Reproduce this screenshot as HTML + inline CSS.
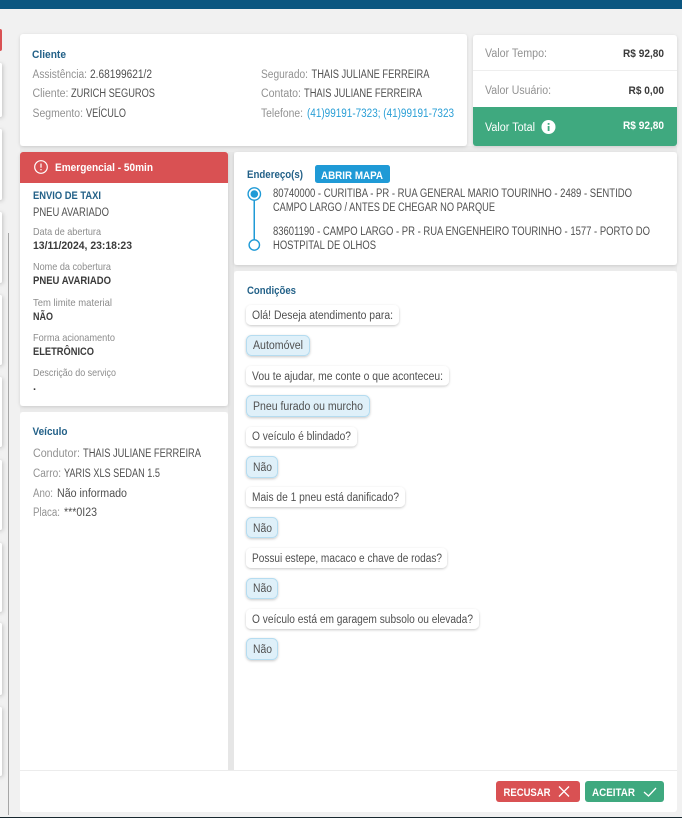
<!DOCTYPE html>
<html lang="pt-BR"><head><meta charset="utf-8"><title>Assistência</title>
<style>
html,body{margin:0;padding:0;background:#f1f1f1;width:682px;height:818px;overflow:hidden}
svg{display:block}
text{font-family:"Liberation Sans",sans-serif;font-size:11.5px;fill:#505050}
.l{fill:#929292}
.h{fill:#236188;font-weight:bold;font-size:11px}
.s{font-size:10.5px;fill:#8c8c8c}
.b{fill:#3a3a3a;font-weight:bold;font-size:11px}
.w{fill:#fff;font-weight:bold;font-size:11px}
.a{fill:#2a9fd6}
</style></head><body>
<svg xmlns="http://www.w3.org/2000/svg" width="682" height="818" viewBox="0 0 682 818">
<defs>
<filter id="sh" x="-10%" y="-10%" width="120%" height="120%"><feDropShadow dx="0" dy="1" stdDeviation="1.5" flood-color="#000" flood-opacity=".14"/></filter>
<filter id="ls" x="-60%" y="-10%" width="250%" height="120%"><feDropShadow dx="1" dy="1" stdDeviation="2" flood-color="#000" flood-opacity=".2"/></filter>
<filter id="bs" x="-20%" y="-30%" width="140%" height="170%"><feDropShadow dx="0" dy="1" stdDeviation="1.3" flood-color="#000" flood-opacity=".22"/></filter>
</defs>
<rect width="682" height="818" fill="#f1f1f1"/>
<rect width="682" height="9" fill="#0b5680"/>
<rect y="817" width="682" height="1" fill="#18282f"/>
<!-- left strip -->
<rect x="-4" y="29" width="6" height="22" rx="2" fill="#d95153"/>
<g fill="#fff" filter="url(#ls)">
<rect x="-4" y="63" width="6" height="54" rx="2"/>
<rect x="-4" y="129" width="6" height="71" rx="2"/>
<rect x="-4" y="212" width="6" height="71" rx="2"/>
<rect x="-4" y="295" width="6" height="70" rx="2"/>
<rect x="-4" y="377" width="6" height="70" rx="2"/>
<rect x="-4" y="460" width="6" height="70" rx="2"/>
<rect x="-4" y="543" width="6" height="69" rx="2"/>
<rect x="-4" y="623" width="6" height="72" rx="2"/>
<rect x="-4" y="707" width="6" height="69" rx="2"/>
</g>
<rect x="8" y="233" width="1" height="582" fill="#a6a6a6"/>
<!-- gaps -->
<rect x="20" y="146" width="657" height="6" fill="#ebebeb"/>
<rect x="228" y="152" width="6" height="618" fill="#e6e6e6"/>
<rect x="20" y="406" width="208" height="6" fill="#ebebeb"/>
<rect x="234" y="265" width="443" height="6" fill="#ebebeb"/>
<!-- cards -->
<rect x="20" y="34" width="447" height="112" rx="3" fill="#fff" filter="url(#sh)"/>
<rect x="473" y="35" width="204" height="111" rx="3" fill="#fff" filter="url(#sh)"/>
<rect x="473" y="70" width="204" height="1" fill="#eee"/>
<path d="M473 107H677V143a3 3 0 0 1-3 3H476a3 3 0 0 1-3-3Z" fill="#3fa97f"/>
<rect x="20" y="152" width="208" height="254" rx="3" fill="#fff" filter="url(#sh)"/>
<path d="M20 183V155a3 3 0 0 1 3-3H225a3 3 0 0 1 3 3V183Z" fill="#d95153"/>
<rect x="20" y="412" width="208" height="400" rx="3" fill="#fff"/>
<rect x="234" y="152" width="443" height="113" rx="3" fill="#fff" filter="url(#sh)"/>
<rect x="234" y="271" width="443" height="520" rx="3" fill="#fff"/>
<path d="M20 770H677V809a3 3 0 0 1-3 3H23a3 3 0 0 1-3-3Z" fill="#fff"/>
<rect x="20" y="770" width="657" height="1" fill="#ececec"/>

<!-- Cliente -->
<text class="h" x="32" y="58" textLength="34" lengthAdjust="spacingAndGlyphs">Cliente</text>
<text class="l" x="32.5" y="78" textLength="54.5" lengthAdjust="spacingAndGlyphs">Assistência:</text>
<text x="90" y="78" textLength="62" lengthAdjust="spacingAndGlyphs">2.68199621/2</text>
<text class="l" x="32.5" y="97" textLength="36" lengthAdjust="spacingAndGlyphs">Cliente:</text>
<text x="71" y="97" textLength="84" lengthAdjust="spacingAndGlyphs">ZURICH SEGUROS</text>
<text class="l" x="32.5" y="117" textLength="50.5" lengthAdjust="spacingAndGlyphs">Segmento:</text>
<text x="86" y="117" textLength="40" lengthAdjust="spacingAndGlyphs">VEÍCULO</text>
<text class="l" x="261" y="78" textLength="47" lengthAdjust="spacingAndGlyphs">Segurado:</text>
<text x="311.500" y="78" textLength="118" lengthAdjust="spacingAndGlyphs">THAIS JULIANE FERREIRA</text>
<text class="l" x="261" y="97" textLength="40" lengthAdjust="spacingAndGlyphs">Contato:</text>
<text x="304" y="97" textLength="118" lengthAdjust="spacingAndGlyphs">THAIS JULIANE FERREIRA</text>
<text class="l" x="261" y="117" textLength="42" lengthAdjust="spacingAndGlyphs">Telefone:</text>
<text class="a" x="307" y="117" textLength="147" lengthAdjust="spacingAndGlyphs">(41)99191-7323; (41)99191-7323</text>

<!-- Valores -->
<text class="l" x="485" y="57" textLength="62" lengthAdjust="spacingAndGlyphs">Valor Tempo:</text>
<text class="b" x="623" y="57" textLength="41" lengthAdjust="spacingAndGlyphs">R$ 92,80</text>
<text class="l" x="485" y="94" textLength="66" lengthAdjust="spacingAndGlyphs">Valor Usuário:</text>
<text class="b" x="628.500" y="94" textLength="35.5" lengthAdjust="spacingAndGlyphs">R$ 0,00</text>
<text x="485" y="131" textLength="50" lengthAdjust="spacingAndGlyphs" style="fill:#fff">Valor Total</text>
<circle cx="548.500" cy="127" r="7" fill="#fff"/>
<rect x="547.700" y="126" width="1.8" height="5" fill="#3fa97f"/><rect x="547.700" y="123" width="1.8" height="1.800" fill="#3fa97f"/>
<text class="w" x="623" y="129" textLength="41" lengthAdjust="spacingAndGlyphs">R$ 92,80</text>

<!-- Emergencial -->
<circle cx="41" cy="167" r="6.3" fill="none" stroke="#fff" stroke-width="1.2"/>
<rect x="40.400" y="163.500" width="1.2" height="4.2" fill="#fff"/><rect x="40.400" y="169" width="1.2" height="1.300" fill="#fff"/>
<text class="w" x="55" y="171" textLength="98" lengthAdjust="spacingAndGlyphs">Emergencial - 50min</text>
<text class="h" x="33" y="199" textLength="68" lengthAdjust="spacingAndGlyphs">ENVIO DE TAXI</text>
<text x="33" y="216" textLength="76" lengthAdjust="spacingAndGlyphs">PNEU AVARIADO</text>
<text class="s" x="33" y="235" textLength="68" lengthAdjust="spacingAndGlyphs">Data de abertura</text>
<text class="b" x="33" y="249" textLength="99" lengthAdjust="spacingAndGlyphs">13/11/2024, 23:18:23</text>
<text class="s" x="33" y="270" textLength="78" lengthAdjust="spacingAndGlyphs">Nome da cobertura</text>
<text class="b" x="33" y="284" textLength="78" lengthAdjust="spacingAndGlyphs">PNEU AVARIADO</text>
<text class="s" x="33" y="306" textLength="79" lengthAdjust="spacingAndGlyphs">Tem limite material</text>
<text class="b" x="33" y="320" textLength="20" lengthAdjust="spacingAndGlyphs">NÃO</text>
<text class="s" x="33" y="341" textLength="82" lengthAdjust="spacingAndGlyphs">Forma acionamento</text>
<text class="b" x="33" y="355" textLength="61" lengthAdjust="spacingAndGlyphs">ELETRÔNICO</text>
<text class="s" x="33" y="376" textLength="83" lengthAdjust="spacingAndGlyphs">Descrição do serviço</text>
<text class="b" x="33" y="390">.</text>

<!-- Veiculo -->
<text class="h" x="32.500" y="435" textLength="35" lengthAdjust="spacingAndGlyphs">Veículo</text>
<text class="l" x="33" y="457" textLength="47" lengthAdjust="spacingAndGlyphs">Condutor:</text>
<text x="83" y="457" textLength="118" lengthAdjust="spacingAndGlyphs">THAIS JULIANE FERREIRA</text>
<text class="l" x="33" y="477" textLength="28" lengthAdjust="spacingAndGlyphs">Carro:</text>
<text x="64" y="477" textLength="96" lengthAdjust="spacingAndGlyphs">YARIS XLS SEDAN 1.5</text>
<text class="l" x="33" y="497" textLength="20" lengthAdjust="spacingAndGlyphs">Ano:</text>
<text x="57" y="497" textLength="70" lengthAdjust="spacingAndGlyphs">Não informado</text>
<text class="l" x="33" y="516" textLength="27" lengthAdjust="spacingAndGlyphs">Placa:</text>
<text x="64" y="516" textLength="33" lengthAdjust="spacingAndGlyphs">***0I23</text>

<!-- Endereço -->
<text class="h" x="247" y="178" textLength="56" lengthAdjust="spacingAndGlyphs">Endereço(s)</text>
<rect x="315" y="165" width="75" height="18" rx="2.500" fill="#1f9ad6"/>
<text class="w" x="321" y="179" textLength="62" lengthAdjust="spacingAndGlyphs">ABRIR MAPA</text>
<rect x="253.500" y="200" width="1.500" height="40" fill="#1f9ad6"/>
<circle cx="254.300" cy="194" r="6.200" fill="#fff" stroke="#1f9ad6" stroke-width="1.400"/>
<circle cx="254.300" cy="194" r="3.800" fill="#1f9ad6"/>
<circle cx="254.300" cy="245" r="5.200" fill="#fff" stroke="#1f9ad6" stroke-width="1.400"/>
<text x="273" y="197" textLength="359" lengthAdjust="spacingAndGlyphs">80740000 - CURITIBA - PR - RUA GENERAL MARIO TOURINHO - 2489 - SENTIDO</text>
<text x="273" y="211" textLength="222" lengthAdjust="spacingAndGlyphs">CAMPO LARGO / ANTES DE CHEGAR NO PARQUE</text>
<text x="273" y="235" textLength="377" lengthAdjust="spacingAndGlyphs">83601190 - CAMPO LARGO - PR - RUA ENGENHEIRO TOURINHO - 1577 - PORTO DO</text>
<text x="273" y="249" textLength="103" lengthAdjust="spacingAndGlyphs">HOSTPITAL DE OLHOS</text>

<!-- Condições -->
<text class="h" x="247" y="294" textLength="49" lengthAdjust="spacingAndGlyphs">Condições</text>
<g fill="#fff" filter="url(#bs)">
<rect x="246" y="305" width="153" height="20" rx="5"/>
<rect x="246" y="366" width="203" height="19.500" rx="5"/>
<rect x="246" y="427" width="111" height="19.500" rx="5"/>
<rect x="246" y="487" width="159" height="20" rx="5"/>
<rect x="246" y="548" width="201" height="20" rx="5"/>
<rect x="246" y="609" width="233" height="20" rx="5"/>
</g>
<g fill="#dff0f9" stroke="#b5dcf0" stroke-width="1" filter="url(#bs)">
<rect x="246.500" y="335.500" width="63" height="20" rx="5"/>
<rect x="246.500" y="395.500" width="123" height="21" rx="5"/>
<rect x="246.500" y="456.500" width="31" height="21" rx="5"/>
<rect x="246.500" y="517.500" width="31" height="20" rx="5"/>
<rect x="246.500" y="578.500" width="31" height="20" rx="5"/>
<rect x="246.500" y="638.500" width="31" height="21" rx="5"/>
</g>
<text x="252" y="319" textLength="141" lengthAdjust="spacingAndGlyphs">Olá! Deseja atendimento para:</text>
<text x="253" y="349" textLength="50" lengthAdjust="spacingAndGlyphs">Automóvel</text>
<text x="252" y="380" textLength="191" lengthAdjust="spacingAndGlyphs">Vou te ajudar, me conte o que aconteceu:</text>
<text x="253" y="410" textLength="110" lengthAdjust="spacingAndGlyphs">Pneu furado ou murcho</text>
<text x="252" y="440" textLength="99" lengthAdjust="spacingAndGlyphs">O veículo é blindado?</text>
<text x="253" y="471" textLength="19" lengthAdjust="spacingAndGlyphs">Não</text>
<text x="252" y="501" textLength="147" lengthAdjust="spacingAndGlyphs">Mais de 1 pneu está danificado?</text>
<text x="253" y="532" textLength="19" lengthAdjust="spacingAndGlyphs">Não</text>
<text x="252" y="562" textLength="190" lengthAdjust="spacingAndGlyphs">Possui estepe, macaco e chave de rodas?</text>
<text x="253" y="592" textLength="19" lengthAdjust="spacingAndGlyphs">Não</text>
<text x="252" y="623" textLength="221" lengthAdjust="spacingAndGlyphs">O veículo está em garagem subsolo ou elevada?</text>
<text x="253" y="653" textLength="19" lengthAdjust="spacingAndGlyphs">Não</text>

<!-- Botões -->
<rect x="496" y="781" width="84" height="21" rx="3" fill="#d95153"/>
<text class="w" x="503.500" y="796" textLength="47" lengthAdjust="spacingAndGlyphs">RECUSAR</text>
<path d="M559 786.500L569 796.500M569 786.500L559 796.500" stroke="#fff" stroke-width="1.300" fill="none"/>
<rect x="585" y="781" width="79" height="21" rx="3" fill="#3fa97f"/>
<text class="w" x="592" y="796" textLength="43" lengthAdjust="spacingAndGlyphs">ACEITAR</text>
<path d="M644 792L648.500 796L656 788" stroke="#fff" stroke-width="1.300" fill="none"/>
</svg>
</body></html>
